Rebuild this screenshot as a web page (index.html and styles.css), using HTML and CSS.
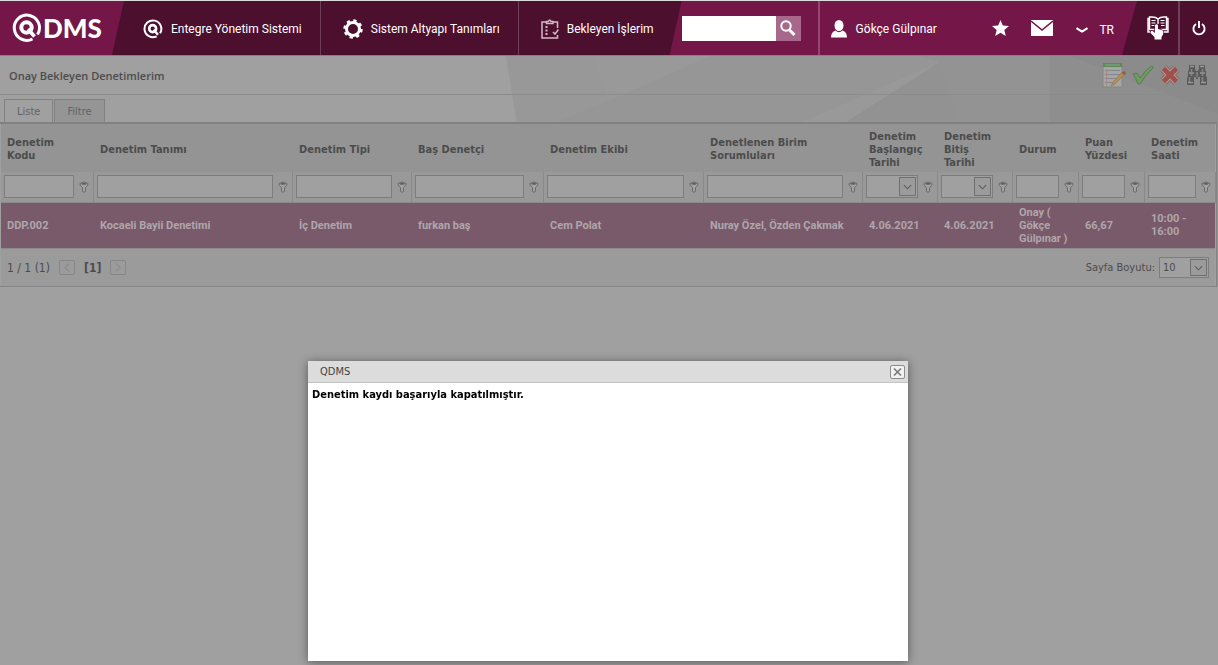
FILE: index.html
```html
<!DOCTYPE html>
<html lang="tr">

<head>
  <meta charset="UTF-8">
  <title>QDMS</title>
  <link rel="stylesheet" href="styles.css">
</head>

<body>
<!-- icons used more than once -->
<svg class="defs" aria-hidden="true">
  <symbol id="funnel" viewBox="0 0 10 12">
    <path d="M1 2.5Q5 -0.5 9 2.5Q9.500 4.500 6.500 6.500V10.500Q5 12 3.500 10.500V6.500Q0.500 4.500 1 2.500Z" fill="#a2a2a2" stroke="#6a6a6a"/>
    <path d="M2 3Q5 1 8 3Q5 4.500 2 3Z" fill="#555"/>
  </symbol>
  <symbol id="down" viewBox="0 0 10 6">
    <path d="M1 1L5 5L9 1" fill="none" stroke="#5c5c5c" stroke-width="1.200"/>
  </symbol>
  <symbol id="qmark" viewBox="0 0 30 30">
    <path d="M20.500 26A12.600 12.600 0 1 1 25.500 21.500" fill="none" stroke="#fff" stroke-width="3"/>
    <circle cx="14.500" cy="14.500" r="5.200" fill="none" stroke="#fff" stroke-width="4"/>
    <path d="M16 16L22.500 23.500" stroke="#fff" stroke-width="3.600"/>
  </symbol>
</svg>

<header class="header">
  <a class="logo" href="#">
    <svg width="30" height="30"><use href="#qmark"/></svg>
    <span>DMS</span>
  </a>
  <nav class="nav">
    <a href="#">
      <svg width="20" height="20"><use href="#qmark"/></svg>
      Entegre Yönetim Sistemi
    </a>
    <a href="#">
      <svg width="20" height="20" viewBox="0 0 20 20">
        <circle cx="10" cy="10" r="6.500" fill="none" stroke="#fff" stroke-width="3"/>
        <circle cx="10" cy="10" r="8.500" fill="none" stroke="#fff" stroke-width="2.400" stroke-dasharray="3.300 3.376"/>
      </svg>
      Sistem Altyapı Tanımları
    </a>
    <a href="#">
      <svg width="18" height="20" viewBox="0 0 18 20" fill="none" stroke="#d3bac8" stroke-width="1.500">
        <path d="M5 3H1V19H16.500V16M16.500 9V3H12.500M5.500 4.500V2.500H7.500Q8.700 -0.500 10 2.500H12V4.500ZM12 13L14 15L17.500 10.500"/>
        <path d="M4.500 8H6.500M4.500 11.500H6.500M4.500 15H6.500" stroke-width="2"/>
      </svg>
      Bekleyen İşlerim
    </a>
  </nav>
  <div class="bar">
    <form class="search">
      <input type="text" aria-label="Ara">
      <button type="button" aria-label="Ara">
        <svg width="16" height="17" viewBox="0 0 16 17" fill="none" stroke="#fff">
          <circle cx="6" cy="6" r="4.700" stroke-width="2"/>
          <path d="M9.500 10L14.500 15" stroke-width="3"/>
        </svg>
      </button>
    </form>
    <a class="user" href="#">
      <svg width="16" height="18" viewBox="0 0 16 18" fill="#fff">
        <ellipse cx="8" cy="5.500" rx="4.500" ry="5.500"/>
        <path d="M0 17.500Q0 12 4.500 10.500Q8 14 11.500 10.500Q16 12 16 17.500Z"/>
      </svg>
      Gökçe Gülpınar
    </a>
    <a class="star" href="#" aria-label="Favoriler">
      <svg width="17" height="16" viewBox="0 0 17 16" fill="#fff"><path d="M8.500 0L10.800 5.500L17 6L12.300 10L13.800 16L8.500 12.800L3.200 16L4.700 10L0 6L6.200 5.500Z"/></svg>
    </a>
    <a class="mail" href="#" aria-label="Mesajlar">
      <svg width="22" height="16" viewBox="0 0 22 16"><path d="M0 0H22V16H0Z" fill="#fff"/><path d="M0 1L11 10L22 1" fill="none" stroke="#741748" stroke-width="1.600"/></svg>
    </a>
    <a class="lang" href="#">
      <svg width="12" height="6" viewBox="0 0 12 6"><path d="M0.500 1Q3 3 6 4.500Q9 3 11.500 1" fill="none" stroke="#fff" stroke-width="2.200"/></svg>
      TR
    </a>
  </div>
  <div class="side">
    <a class="help" href="#" aria-label="Yardım">
      <svg width="22" height="24" viewBox="0 0 22 24">
        <path d="M11 3Q9 1 5 1H2.500V2.500H1V16H21V2.500H19.500V1H17Q13 1 11 3M11 3V8M2.500 2.500V13.500H8M19.500 2.500V13.500H14" fill="none" stroke="#fff" stroke-width="1.400"/>
        <path d="M4.500 4.500H8.500M4.500 7H8.500M4.500 9.500H8M13.500 4.500H17.500M13.500 7H17.500M14 9.500H17.500" stroke="#fff" stroke-width="1.200"/>
        <path d="M8 9Q9.500 7.500 11 9V13L15 14Q17 15 16 18.500L14.500 21V23.500H7.500V21L3.500 17Q3 14.500 5.500 15L8 17Z" fill="#fff" stroke="#4c0f2e" stroke-width="1.200" paint-order="stroke"/>
      </svg>
    </a>
    <a class="power" href="#" aria-label="Çıkış">
      <svg width="14" height="15" viewBox="0 0 14 15" fill="none" stroke="#fff" stroke-width="1.900"><path d="M4 3A5.600 5.600 0 1 0 10 3M7 0V7"/></svg>
    </a>
  </div>
</header>

<main class="page">
  <div class="top">
    <svg class="facets" width="718" height="67" viewBox="0 0 718 67" aria-hidden="true">
      <path d="M6 0H718V67H17Z" fill="#999"/>
      <path d="M6 0H94L114 60L60 67H17Z" fill="#989898"/>
      <path d="M210 0L120 40L55 67H300L440 6L420 0Z" fill="#969696"/>
      <path d="M440 6L420 0H718V67H345Z" fill="#939393"/>
      <path d="M440 6L345 67H458Z" fill="#929292"/>
      <path d="M550 0H718V67H550Z" fill="#8e8e8e"/>
      <path d="M570 0H718V58Z" fill="#8b8b8b"/>
    </svg>
    <div class="title">
      <h1>Onay Bekleyen Denetimlerim</h1>
      <div class="tools">
        <button type="button" aria-label="Düzenle">
          <svg width="24" height="26" viewBox="0 0 24 26">
            <path d="M1 2H20V25H1Z" fill="#a5a5a5" stroke="#7e8a7c"/>
            <path d="M1 1H20V5H1Z" fill="#5b8a56"/>
            <path d="M3 3H18" stroke="#90a68e"/>
            <path d="M3 8.500H18M3 12.500H18M3 16.500H15M3 20.500H12" stroke="#85858c"/>
            <path d="M4.500 7V24" stroke="#a88"/>
            <path d="M9 24L11 20L20 10L23 12L13 22Z" fill="#b08d52" stroke="#8c7858" stroke-width=".6"/>
            <circle cx="22" cy="11" r="1.800" fill="#a2544f"/>
          </svg>
        </button>
        <button type="button" aria-label="Onayla">
          <svg width="22" height="20" viewBox="0 0 22 20"><path d="M1 9L5 8L8 13Q13 5 20 1L21 3Q13 10 8 19H6Q4 13 1 9Z" fill="#6f9a62" stroke="#557d4f"/></svg>
        </button>
        <button type="button" aria-label="Reddet">
          <svg width="20" height="20" viewBox="0 0 20 20"><path d="M3.500 3.500L16.500 16.500M16.500 3.500L3.500 16.500" stroke="#8a5a56" stroke-width="8.500"/><path d="M3.500 3.500L16.500 16.500M16.500 3.500L3.500 16.500" stroke="#ad9b99" stroke-width="7"/><path d="M3.500 3.500L16.500 16.500M16.500 3.500L3.500 16.500" stroke="#a0504a" stroke-width="4.600"/></svg>
        </button>
        <button type="button" aria-label="Bul">
          <svg width="22" height="21" viewBox="0 0 22 21">
            <path d="M3 0H9V4L10 6H12L13 4V0H19V4L20 7V11L21 13V20H14V12H12V14H10V12H8V20H1V13L2 11V7L3 4Z" fill="#5a5a5a"/>
            <path d="M4 1.500H8M14 1.500H18M2 17.500H7M15 17.500H20M3 8H8M14 8H19" stroke="#999" stroke-width="1.400"/>
            <path d="M3.500 12V17M16.500 12V17M5.500 4V11M16.500 4V11M11 7V12" stroke="#868686" stroke-width="1.500"/>
          </svg>
        </button>
      </div>
    </div>
    <div class="tabs">
      <button type="button" class="tab current">Liste</button>
      <button type="button" class="tab">Filtre</button>
    </div>
  </div>

  <div class="grid">
    <table>
      <colgroup>
        <col class="kod"><col class="tanim"><col class="tip"><col class="bas"><col class="ekip"><col class="birim">
        <col class="tarih"><col class="tarih"><col class="dar"><col class="dar"><col class="saat">
      </colgroup>
      <thead>
        <tr class="names">
          <th>Denetim Kodu</th>
          <th>Denetim Tanımı</th>
          <th>Denetim Tipi</th>
          <th>Baş Denetçi</th>
          <th>Denetim Ekibi</th>
          <th>Denetlenen Birim Sorumluları</th>
          <th>Denetim Başlangıç Tarihi</th>
          <th>Denetim Bitiş Tarihi</th>
          <th>Durum</th>
          <th>Puan Yüzdesi</th>
          <th>Denetim Saati</th>
        </tr>
        <tr class="filters">
          <td><div class="filter"><input type="text" aria-label="Denetim Kodu"><svg class="funnel"><use href="#funnel"/></svg></div></td>
          <td><div class="filter"><input type="text" aria-label="Denetim Tanımı"><svg class="funnel"><use href="#funnel"/></svg></div></td>
          <td><div class="filter"><input type="text" aria-label="Denetim Tipi"><svg class="funnel"><use href="#funnel"/></svg></div></td>
          <td><div class="filter"><input type="text" aria-label="Baş Denetçi"><svg class="funnel"><use href="#funnel"/></svg></div></td>
          <td><div class="filter"><input type="text" aria-label="Denetim Ekibi"><svg class="funnel"><use href="#funnel"/></svg></div></td>
          <td><div class="filter"><input type="text" aria-label="Denetlenen Birim Sorumluları"><svg class="funnel"><use href="#funnel"/></svg></div></td>
          <td><div class="filter"><span class="combo"><select aria-label="Denetim Başlangıç Tarihi"><option></option></select><i><svg><use href="#down"/></svg></i></span><svg class="funnel"><use href="#funnel"/></svg></div></td>
          <td><div class="filter"><span class="combo"><select aria-label="Denetim Bitiş Tarihi"><option></option></select><i><svg><use href="#down"/></svg></i></span><svg class="funnel"><use href="#funnel"/></svg></div></td>
          <td><div class="filter"><input type="text" aria-label="Durum"><svg class="funnel"><use href="#funnel"/></svg></div></td>
          <td><div class="filter"><input type="text" aria-label="Puan Yüzdesi"><svg class="funnel"><use href="#funnel"/></svg></div></td>
          <td><div class="filter"><input type="text" aria-label="Denetim Saati"><svg class="funnel"><use href="#funnel"/></svg></div></td>
        </tr>
      </thead>
      <tbody>
        <tr class="selected">
          <td>DDP.002</td>
          <td>Kocaeli Bayii Denetimi</td>
          <td>İç Denetim</td>
          <td>furkan baş</td>
          <td>Cem Polat</td>
          <td>Nuray Özel, Özden Çakmak</td>
          <td>4.06.2021</td>
          <td>4.06.2021</td>
          <td>Onay ( Gökçe Gülpınar )</td>
          <td>66,67</td>
          <td>10:00 - 16:00</td>
        </tr>
      </tbody>
    </table>
    <div class="pager">
      <span>1 / 1 (1)</span>
      <button type="button" aria-label="Önceki"><svg width="6" height="9" viewBox="0 0 6 9"><path d="M5 .5L1 4.500L5 8.500"/></svg></button>
      <b>[1]</b>
      <button type="button" aria-label="Sonraki"><svg width="6" height="9" viewBox="0 0 6 9"><path d="M1 .5L5 4.500L1 8.500"/></svg></button>
      <label for="size">Sayfa Boyutu:</label>
      <span class="combo size"><select id="size"><option>10</option></select><i><svg><use href="#down"/></svg></i></span>
    </div>
  </div>
</main>

<div class="popup" role="dialog" aria-labelledby="popup-title">
  <div class="popup-head">
    <span id="popup-title">QDMS</span>
    <button type="button" aria-label="Kapat"><svg width="9" height="8" viewBox="0 0 9 8"><path d="M1 .5L8 7.500M8 .5L1 7.500" stroke="#777" stroke-width="1.500"/></svg></button>
  </div>
  <p>Denetim kaydı başarıyla kapatılmıştır.</p>
</div>
</body>

</html>
```
FILE: styles.css
```css
* {
  box-sizing: border-box;
  padding: 0;
  margin: 0;
}

body {
  min-height: 100vh;
  background: #a0a0a0;
  color: #4c4c4c;
  font-family: "DejaVu Sans Condensed", Tahoma, "DejaVu Sans", sans-serif;
  font-size: 11px;
}

a {
  color: inherit;
  text-decoration: none;
}

button,
input,
select {
  font: inherit;
  color: inherit;
  border: 0;
  background: none;
}

svg {
  display: block;
  flex: none;
}

.defs {
  position: absolute;
  width: 0;
  height: 0;
}

/* header */
.header {
  display: flex;
  height: 56px;
  border-top: 1px solid #dcdcdc;
  border-bottom: 1px solid #858085;
  background: #4c0f2e;
  color: #fff;
  font-family: Roboto, "Open Sans", sans-serif;
  font-size: 12px;
}

.header a {
  display: flex;
  align-items: center;
  white-space: nowrap;
}

.header .logo {
  gap: 1px;
  width: 124px;
  padding-left: 12px;
  background: #741748;
  clip-path: polygon(0 0, 100% 0, calc(100% - 12px) 100%, 0 100%);
  font-family: Lato, sans-serif;
  font-size: 26px;
  font-weight: 900;
}

.nav {
  display: flex;
}

.nav a {
  gap: 8px;
  padding: 1px 18px 0 22px;
  border-right: 1px solid #6f3f58;
}

.nav a:first-child {
  padding-left: 19px;
}

.nav a:last-child {
  padding-right: 16px;
  border-right: 0;
}

.bar {
  display: flex;
  flex: 1;
  background: #741748;
  clip-path: polygon(12px 0, 100% 0, calc(100% - 15px) 100%, 0 100%);
}

.search {
  display: flex;
  align-items: center;
  padding: 0 17px 0 12px;
  border-right: 2px solid #94476f;
}

.search input {
  width: 94px;
  height: 25px;
  padding: 0 4px;
  background: #fff;
  color: #333;
}

.search button {
  display: flex;
  align-items: center;
  justify-content: center;
  width: 25px;
  height: 25px;
  background: #a8688c;
}

.user {
  gap: 9px;
  padding: 1px 0 0 11px;
}

.star {
  margin-left: auto;
}

.mail {
  margin-left: 22px;
}

.lang {
  gap: 11px;
  margin: 4px 23px 0 23px;
}

.side {
  display: flex;
  width: 81px;
}

.side a {
  justify-content: center;
}

.help {
  flex: 1;
  border-right: 2px solid #6f3f58;
}

.power {
  width: 38px;
}

/* title and tabs */
.page {
  border-right: 1px solid #929292;
}

.top {
  position: relative;
}

.facets {
  position: absolute;
  top: 0;
  right: -1px;
}

.title,
.tabs {
  position: relative;
  display: flex;
}

.title {
  align-items: center;
  justify-content: space-between;
  height: 39px;
  padding: 0 9px;
  border-bottom: 1px solid #8b8b8b;
}

.title h1 {
  font-family: "Open Sans", sans-serif;
  font-size: 11px;
  font-weight: 600;
}

.tools {
  display: flex;
  align-items: center;
  gap: 6px;
}

.tabs {
  align-items: flex-end;
  gap: 1px;
  height: 29px;
  padding-left: 4px;
  border-bottom: 2px solid #818181;
}

.tab {
  height: 23px;
  padding: 0 12px;
  border: 1px solid #818181;
  border-bottom: 0;
  background: #959595;
  color: #636363;
}

.tab.current {
  background: #a0a0a0;
}

/* grid */
.grid {
  border-right: 1px solid #848484;
  border-bottom: 1px solid #848484;
  padding: 0 1px;
}

table {
  width: 100%;
  table-layout: fixed;
  border-collapse: collapse;
}

.kod { width: 92px; }
.tanim { width: 199px; }
.tip { width: 119px; }
.bas { width: 132px; }
.ekip { width: 160px; }
.birim { width: 159px; }
.tarih { width: 75px; }
.dar { width: 66px; }
.saat { width: 71px; }

th,
.selected td {
  line-height: 13px;
  text-align: left;
}

th {
  padding: 2px 12px 0 7px;
}

.selected td {
  padding: 0 4px 0 7px;
}

th:first-child,
.selected td:first-child {
  padding-left: 6px;
}

.names {
  height: 48px;
  background: #949494;
}

.filters {
  height: 30px;
  background: #999;
}

.filters td {
  border-right: 1px solid #898989;
  border-bottom: 1px solid #898989;
}

.filter {
  display: flex;
  align-items: center;
  gap: 5px;
  padding: 0 4px 0 3px;
}

.filter input,
.combo select {
  width: 100%;
  min-width: 0;
  height: 23px;
  padding: 0 3px;
  border: 1px solid #7d7d7d;
  background: #a0a0a0;
}

.funnel {
  width: 10px;
  height: 12px;
}

.combo {
  position: relative;
  display: block;
  flex: 1;
  min-width: 0;
}

.combo select {
  display: block;
  appearance: none;
}

.combo i {
  position: absolute;
  top: 2px;
  right: 2px;
  bottom: 2px;
  display: flex;
  align-items: center;
  justify-content: center;
  width: 17px;
  border: 1px solid #707070;
  background: #9b9b9b;
  pointer-events: none;
}

.combo i svg {
  width: 9px;
  height: 6px;
}

.selected {
  height: 46px;
  background: #785a6a;
  color: #b0a6ab;
  font-family: Roboto, "Open Sans", sans-serif;
  font-weight: bold;
}

.pager {
  display: flex;
  align-items: center;
  gap: 9px;
  height: 38px;
  padding: 0 6px;
  border-top: 1px solid #8b8b8b;
  background: #9b9b9b;
  font-size: 12px;
}

.pager button {
  display: flex;
  align-items: center;
  justify-content: center;
  width: 16px;
  height: 15px;
  border: 1px solid #868686;
  border-radius: 2px;
}

.pager button path {
  fill: none;
  stroke: #808080;
}

.pager label {
  margin-left: auto;
  font-size: 11px;
}

.pager .size {
  flex: none;
  width: 50px;
  margin-left: -5px;
  font-size: 11px;
}

.pager .size select {
  height: 21px;
}

/* message window */
.popup {
  position: fixed;
  bottom: 4px;
  left: calc(50% - 301px);
  width: 600px;
  height: 300px;
  background: #fff;
  color: #000;
  box-shadow: 0 1px 9px rgba(0, 0, 0, .45);
}

.popup-head {
  display: flex;
  align-items: center;
  justify-content: space-between;
  height: 22px;
  padding: 0 3px 0 12px;
  border-bottom: 1px solid #c4c4c4;
  background: #dcdcdc;
  color: #444;
}

.popup-head button {
  display: flex;
  align-items: center;
  justify-content: center;
  width: 15px;
  height: 14px;
  border: 1px solid #8c8c8c;
  border-radius: 2px;
  background: #f2f2f2;
}

.popup p {
  padding: 5px 4px;
  font-weight: bold;
}
```
